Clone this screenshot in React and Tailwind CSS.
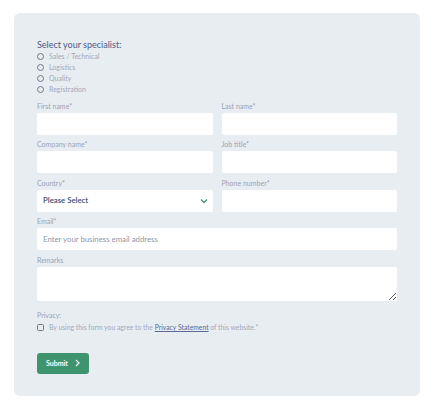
import React from 'react';

const SPECIALISTS = ['Sales / Technical', 'Logistics', 'Quality', 'Registration'];

function Label({ children }) {
  return <div className="text-[7px] leading-[11px] text-[#9aa2b6] mb-px">{children}</div>;
}

function Field({ label, placeholder }) {
  return (
    <div className="flex flex-col">
      <Label>{label}</Label>
      <input
        className="block h-[22px] w-full rounded-[2px] bg-white px-[6px] text-[7.8px] text-[#3d4b6e] placeholder:text-[#8e97aa] outline-none"
        placeholder={placeholder}
      />
    </div>
  );
}

export default function App() {
  return (
    <div className="min-h-[411px] bg-white pt-[13px] pl-[14px]" style={{ fontFamily: 'Lato, "Open Sans", sans-serif' }}>
      <div className="w-[406px] h-[383px] rounded-[6px] bg-[#e8edf2] px-[23px] pt-[25px]">
        <div className="text-[9px] leading-[13px] text-[#4c5c86]">Select your specialist:</div>
        <div className="flex flex-col">
          {SPECIALISTS.map((s) => (
            <label key={s} className="flex items-center gap-[5px] h-[11px]">
              <span className="w-[7px] h-[7px] rounded-full border border-[#6f7789]" />
              <span className="text-[7px] text-[#a1a9bb]">{s}</span>
            </label>
          ))}
        </div>

        <div className="mt-[5.5px] flex flex-col gap-[4.5px]">
          <div className="grid grid-cols-2 gap-x-[9px]">
            <Field label="First name*" />
            <Field label="Last name*" />
          </div>
          <div className="grid grid-cols-2 gap-x-[9px]">
            <Field label="Company name*" />
            <Field label="Job title*" />
          </div>
          <div className="grid grid-cols-2 gap-x-[9px]">
            <div className="flex flex-col">
              <Label>Country*</Label>
              <div className="relative">
                <select className="block appearance-none h-[22px] w-full rounded-[2px] bg-white pl-[6px] text-[7.8px] font-semibold text-[#3b4a70] outline-none">
                  <option>Please Select</option>
                </select>
                <svg className="absolute right-[5px] top-[8px] w-[8px] h-[6px]" viewBox="0 0 8 6" fill="none">
                  <path d="M1 1.5 L4 4.5 L7 1.5" stroke="#3f9470" strokeWidth="1.3" />
                </svg>
              </div>
            </div>
            <Field label="Phone number*" />
          </div>
          <Field label="Email*" placeholder="Enter your business email address" />
          <div className="flex flex-col">
            <Label>Remarks</Label>
            <textarea className="h-[34px] w-full rounded-[2px] bg-white px-[6px] text-[8px] outline-none block" />
          </div>
        </div>

        <div className="mt-[9px]">
          <Label>Privacy:</Label>
          <div className="mt-[1px] flex items-center gap-[5px] h-[11px]">
            <span className="w-[7px] h-[7px] rounded-[1.5px] border border-[#6f7789]" />
            <span className="text-[6.8px] text-[#a1a9bb] whitespace-nowrap">
              By using this form you agree to the{' '}
              <span className="underline text-[#5a6898]">Privacy Statement</span> of this website.*
            </span>
          </div>
        </div>

        <button className="mt-[20px] h-[21px] w-[52px] rounded-[3px] bg-[#3f9470] flex items-center justify-center gap-[7px] text-white text-[7px] font-bold">
          Submit
          <svg className="w-[5px] h-[8px]" viewBox="0 0 5 8" fill="none">
            <path d="M1 1 L4 4 L1 7" stroke="white" strokeWidth="1.2" />
          </svg>
        </button>
      </div>
    </div>
  );
}
